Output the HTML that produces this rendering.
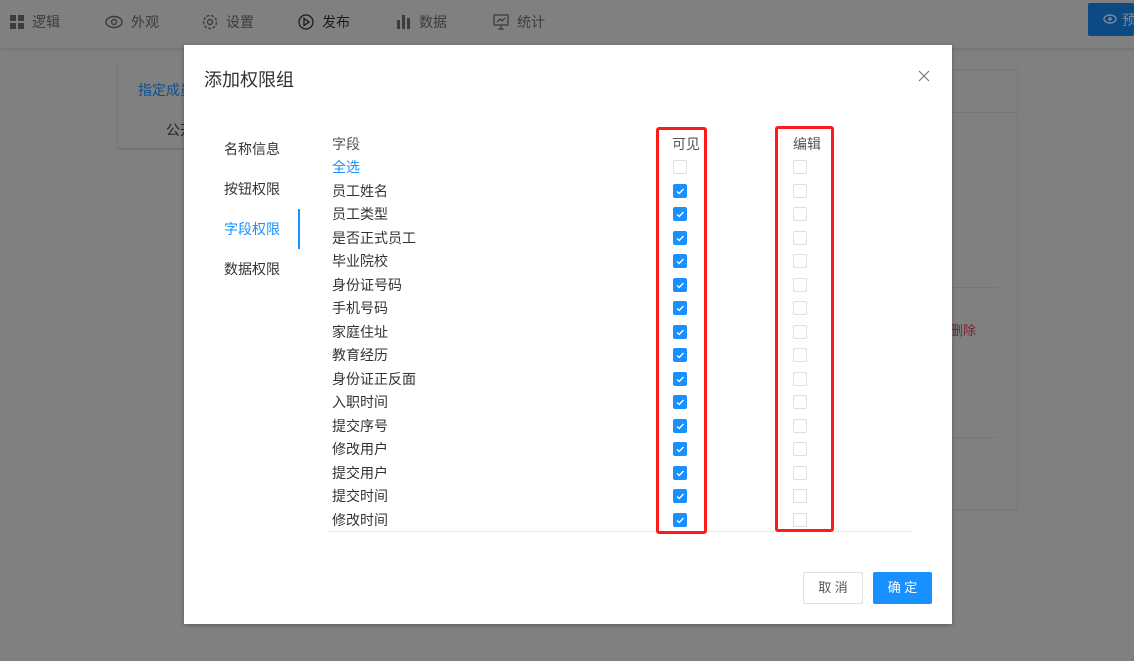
<!DOCTYPE html>
<html><head><meta charset="utf-8"><style>
*{margin:0;padding:0;box-sizing:border-box}
body{width:1134px;height:661px;overflow:hidden;background:#808080;font-family:"Liberation Sans","Noto Sans CJK SC",sans-serif;font-size:14px;position:relative}
.a{position:absolute}
.hdr{left:0;top:0;width:1134px;height:48px;background:#808080;box-shadow:0 1px 3px rgba(0,0,0,.15)}
.nav{top:12px;font-size:14px;color:#3c3c3c;display:flex;align-items:center;gap:8px}
.dlg{left:184px;top:45px;width:768px;height:579px;background:#fff;box-shadow:0 1px 4px rgba(0,0,0,.3)}
.lbl{font-size:14px;color:#333;line-height:18px;white-space:nowrap}
.cb{width:14px;height:14px;border:1px solid #dcdfe6;border-radius:2px;background:#fff}
.cb.on{background:#1890ff;border-color:#1890ff}
.red{border:3px solid #ff1a1a;border-radius:3px}
</style></head><body>
<div class="a hdr"></div>
<div class="a nav" style="left:10px"><svg width="14" height="14"><rect x="0" y="0" width="6" height="6" fill="#3c3c3c"/><rect x="8" y="0" width="6" height="6" fill="#3c3c3c"/><rect x="0" y="8" width="6" height="6" fill="#3c3c3c"/><rect x="8" y="8" width="6" height="6" fill="#3c3c3c"/></svg><span>逻辑</span></div>
<div class="a nav" style="left:105px"><svg width="18" height="14"><ellipse cx="9" cy="7" rx="8" ry="5.5" fill="none" stroke="#3c3c3c" stroke-width="1.4"/><circle cx="9" cy="7" r="2.5" fill="none" stroke="#3c3c3c" stroke-width="1.4"/></svg><span>外观</span></div>
<div class="a nav" style="left:202px"><svg width="16" height="16"><circle cx="8" cy="8" r="6.5" fill="none" stroke="#3c3c3c" stroke-width="1.4" stroke-dasharray="3 1.5"/><circle cx="8" cy="8" r="2.5" fill="none" stroke="#3c3c3c" stroke-width="1.4"/></svg><span>设置</span></div>
<div class="a nav" style="left:298px;color:#1a1a1a"><svg width="16" height="16"><circle cx="8" cy="8" r="7" fill="none" stroke="#1a1a1a" stroke-width="1.3"/><path d="M6 4.5L11 8L6 11.5Z" fill="none" stroke="#1a1a1a" stroke-width="1.3"/></svg><span>发布</span></div>
<div class="a nav" style="left:397px"><svg width="14" height="14"><rect x="0" y="5" width="3" height="9" fill="#3c3c3c"/><rect x="5" y="0" width="3" height="14" fill="#3c3c3c"/><rect x="10" y="3" width="3" height="11" fill="#3c3c3c"/></svg><span>数据</span></div>
<div class="a nav" style="left:493px"><svg width="16" height="16"><rect x="1" y="1" width="14" height="10" fill="none" stroke="#3c3c3c" stroke-width="1.3"/><path d="M4 8L7 5L9 7L12 4M8 11V15M5 15H11" fill="none" stroke="#3c3c3c" stroke-width="1.3"/></svg><span>统计</span></div>
<div class="a" style="left:1088px;top:3px;width:46px;height:33px;background:#0c4a84;border-radius:2px;overflow:hidden;white-space:nowrap">
<svg class="a" style="left:15px;top:11px" width="14" height="10"><ellipse cx="7" cy="5" rx="6" ry="4" fill="none" stroke="#7f8a96" stroke-width="1.4"/><circle cx="7" cy="5" r="1.8" fill="#7f8a96"/></svg>
<span class="a" style="left:34px;top:7px;color:#7f8a96;font-size:14px">预览</span></div>
<div class="a" style="left:118px;top:60px;width:80px;height:88px;background:#808080;box-shadow:0 1px 2px rgba(0,0,0,.2)"></div>
<div class="a" style="left:138px;top:80px;color:#0c4f95;font-size:14px">指定成员</div>
<div class="a" style="left:166px;top:120px;color:#222;font-size:14px">公开</div>
<div class="a" style="left:940px;top:69px;width:78px;height:441px;border:1px solid #777"></div>
<div class="a" style="left:940px;top:112px;width:78px;height:1px;background:#777"></div>
<div class="a" style="left:940px;top:287px;width:57px;height:1px;background:#777"></div>
<div class="a" style="left:940px;top:437px;width:57px;height:1px;background:#777"></div>
<div class="a" style="left:950px;top:320px;color:#7a2030;font-size:13px">删除</div>

<div class="a dlg"></div>
<div class="a" style="left:204px;top:66px;font-size:18px;color:#303133">添加权限组</div>
<svg class="a" style="left:918px;top:70px" width="12" height="12"><path d="M1 1L11 11M11 1L1 11" stroke="#777" stroke-width="1.2"/></svg>
<div class="a lbl" style="left:224px;top:140px">名称信息</div>
<div class="a lbl" style="left:224px;top:180px">按钮权限</div>
<div class="a lbl" style="left:224px;top:220px;color:#1890ff">字段权限</div>
<div class="a lbl" style="left:224px;top:260px">数据权限</div>
<div class="a" style="left:298px;top:209px;width:2px;height:40px;background:#1890ff"></div>
<div class="a lbl" style="left:332px;top:135px;color:#555">字段</div>
<div class="a lbl" style="left:672px;top:135px;color:#555">可见</div>
<div class="a lbl" style="left:793px;top:135px;color:#555">编辑</div>
<div id="rows"></div>
<div class="a" style="left:328px;top:531px;width:584px;height:1px;background:#e8e8e8"></div>
<div class="a red" style="left:656px;top:127px;width:51px;height:407px"></div>
<div class="a red" style="left:775px;top:126px;width:59px;height:406px"></div>
<div class="a" style="left:803px;top:572px;width:60px;height:32px;border:1px solid #dcdfe6;border-radius:2px;font-size:13px;color:#555;text-align:center;line-height:30px">取 消</div>
<div class="a" style="left:873px;top:572px;width:59px;height:32px;background:#1890ff;border-radius:2px;font-size:13px;color:#fff;text-align:center;line-height:32px">确 定</div>
<script>
var n=["全选","员工姓名","员工类型","是否正式员工","毕业院校","身份证号码","手机号码","家庭住址","教育经历","身份证正反面","入职时间","提交序号","修改用户","提交用户","提交时间","修改时间"];
var h="";
n.forEach(function(t,i){var y=167+i*23.53;
h+='<div class="a lbl" style="left:332px;top:'+(y-9)+'px;'+(i==0?'color:#1890ff':'color:#333')+'">'+t+'</div>';
h+='<div class="a cb'+(i?' on':'')+'" style="left:673px;top:'+(y-7)+'px">'+(i?'<svg width="12" height="12" style="display:block"><path d="M3 6.5L5.2 8.5L9.5 4" fill="none" stroke="#fff" stroke-width="1.3"/></svg>':'')+'</div>';
h+='<div class="a cb" style="left:793px;top:'+(y-7)+'px"></div>';});
document.getElementById("rows").innerHTML=h;
</script>
</body></html>
